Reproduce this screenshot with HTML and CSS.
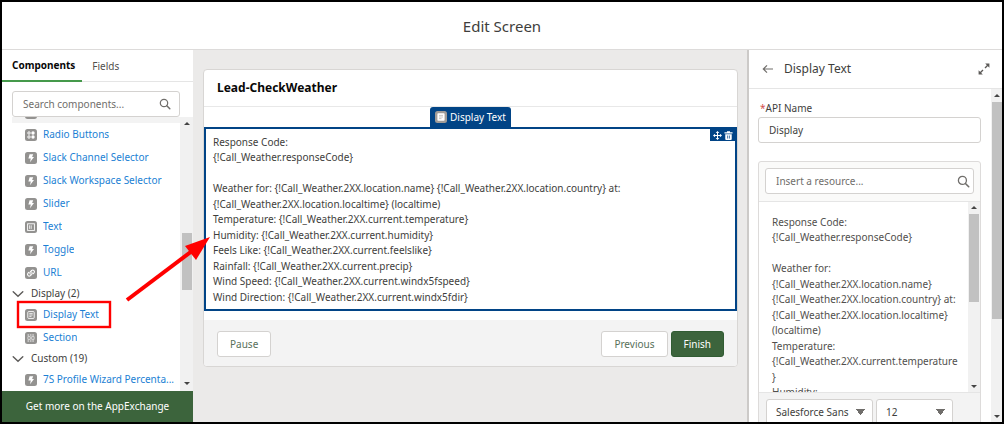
FILE: index.html
```html
<!DOCTYPE html>
<html lang="en">
<head>
<meta charset="utf-8">
<title>Edit Screen</title>
<link rel="stylesheet" href="styles.css">
</head>
<body>
<svg class="sprite" aria-hidden="true">
  <symbol id="bolt" viewBox="0 0 12 12"><rect width="12" height="12" rx="2.5" fill="#939290"/><path d="M4.6 2.2h3.6L7.1 4.9h1.9L5 10.2l.8-3.700H3.400z" fill="#fff"/></symbol>
  <symbol id="radio" viewBox="0 0 12 12"><rect width="12" height="12" rx="2.5" fill="#939290"/><g fill="none" stroke="#fff"><circle cx="4" cy="4" r="1.2"/><circle cx="4" cy="8" r="1.2"/></g><circle cx="8" cy="4" r="1.7" fill="#fff"/><circle cx="8" cy="8" r="1.7" fill="#fff"/></symbol>
  <symbol id="textbox" viewBox="0 0 12 12"><rect width="12" height="12" rx="2.5" fill="#939290"/><rect x="2.6" y="2.8" width="6.8" height="6.6" fill="none" stroke="#fff" stroke-width=".9"/><path d="M4.6 4.3v3.6M6.2 4.3v3.6" stroke="#fff" stroke-width=".8"/></symbol>
  <symbol id="url" viewBox="0 0 12 12"><rect width="12" height="12" rx="2.5" fill="#939290"/><g fill="none" stroke="#fff" stroke-width="1.1" stroke-linecap="round"><path d="M5.3 7.1a1.7 1.7 0 0 1 0-2.3l1.3-1.3a1.7 1.7 0 0 1 2.4 2.4l-.8.8"/><path d="M6.7 5a1.7 1.7 0 0 1 0 2.3L5.4 8.6A1.7 1.7 0 0 1 3 6.2l.8-.8"/></g></symbol>
  <symbol id="doc" viewBox="0 0 12 12"><rect width="12" height="12" rx="2.5" fill="#939290"/><rect x="2.8" y="2.6" width="6.4" height="6.8" rx=".8" fill="none" stroke="#fff" stroke-width=".9"/><path d="M4.3 4.6h3.4M4.3 6h3.4M4.3 7.4h2.2" stroke="#fff" stroke-width=".8"/></symbol>
  <symbol id="doc-solid" viewBox="0 0 12 12"><rect width="12" height="12" rx="2.5" fill="#a09c98"/><rect x="2.400" y="2.200" width="7.200" height="7.600" rx=".8" fill="#fff"/><path d="M4 4.400h4M4 6h4M4 7.600h2.500" stroke="#b5b2af" stroke-width=".7"/></symbol>
  <symbol id="section" viewBox="0 0 12 12"><rect width="12" height="12" rx="2.5" fill="#939290"/><path d="M2.500 3h7M2.500 9h7" stroke="#fff" stroke-width=".9" stroke-dasharray="1.600 .8"/><path d="M2.900 4.600h2.400v2.800H2.900zM6.700 4.600h2.400v2.800H6.700z" fill="none" stroke="#e8e8e8" stroke-width=".8"/></symbol>
  <symbol id="search" viewBox="0 0 12 12"><circle cx="5" cy="5" r="3.7" fill="none" stroke="#706e6b" stroke-width="1.2"/><path d="M7.8 7.8l3 3" stroke="#706e6b" stroke-width="1.5" stroke-linecap="round"/></symbol>
  <symbol id="chevron" viewBox="0 0 12 12"><path d="M1.2 3.8L6 8.3l4.8-4.5" fill="none" stroke="#5c5a58" stroke-width="1.4" stroke-linecap="round"/></symbol>
</svg>

<header class="titlebar"><h1>Edit Screen</h1></header>

<main class="workspace">
  <aside class="toolbox">
    <nav class="tabs">
      <button class="tab tab-active" type="button">Components</button>
      <button class="tab" type="button">Fields</button>
    </nav>
    <div class="search">
      <input type="text" class="field" placeholder="Search components..." aria-label="Search components">
      <svg class="icon search-icon"><use href="#search"/></svg>
    </div>
    <div class="list-area">
      <div class="list">
        <div class="list-cap"><svg class="icon"><use href="#bolt"/></svg></div>
        <a class="item" href="#"><svg class="icon"><use href="#radio"/></svg><span>Radio Buttons</span></a>
        <a class="item" href="#"><svg class="icon"><use href="#bolt"/></svg><span>Slack Channel Selector</span></a>
        <a class="item" href="#"><svg class="icon"><use href="#bolt"/></svg><span>Slack Workspace Selector</span></a>
        <a class="item" href="#"><svg class="icon"><use href="#bolt"/></svg><span>Slider</span></a>
        <a class="item" href="#"><svg class="icon"><use href="#textbox"/></svg><span>Text</span></a>
        <a class="item" href="#"><svg class="icon"><use href="#bolt"/></svg><span>Toggle</span></a>
        <a class="item" href="#"><svg class="icon"><use href="#url"/></svg><span>URL</span></a>
        <button class="group" type="button"><svg class="icon"><use href="#chevron"/></svg>Display (2)</button>
        <a class="item" href="#"><svg class="icon"><use href="#doc"/></svg><span>Display Text</span></a>
        <a class="item" href="#"><svg class="icon"><use href="#section"/></svg><span>Section</span></a>
        <button class="group" type="button"><svg class="icon"><use href="#chevron"/></svg>Custom (19)</button>
        <a class="item" href="#"><svg class="icon"><use href="#bolt"/></svg><span>7S Profile Wizard Percenta...</span></a>
      </div>
      <div class="scrollbar toolbox-scroll"><i class="up"></i><b class="thumb"></b><i class="down"></i></div>
    </div>
    <button class="exchange" type="button">Get more on the AppExchange</button>
  </aside>

  <section class="canvas">
    <article class="card">
      <h2>Lead-CheckWeather</h2>
      <div class="card-body">
        <div class="component-tab"><svg class="icon"><use href="#doc-solid"/></svg>Display Text</div>
        <div class="component">
          <div class="component-tools">
            <button type="button" aria-label="Move"><svg viewBox="0 0 10 10"><path d="M5 1v8M1 5h8" stroke="#fff" stroke-width="1.1"/><path d="M5 0l2 2.3H3zM5 10l2-2.3H3zM0 5l2.3-2v4zM10 5L7.700 3v4z" fill="#fff"/></svg></button>
            <button type="button" aria-label="Delete"><svg viewBox="0 0 10 10"><path d="M.5 1.500h2.800V.2h3.400v1.300h2.800v1.400H.5zM1.400 3.600h7.200V9q0 1-1 1H2.400q-1 0-1-1z" fill="#fff"/><path d="M4 5v3.400M6 5v3.400" stroke="#014486" stroke-width=".8"/></svg></button>
          </div>
          <div class="lines">
            <div>Response Code:</div>
            <div>{!Call_Weather.responseCode}</div>
            <div></div>
            <div>Weather for: {!Call_Weather.2XX.location.name} {!Call_Weather.2XX.location.country} at:</div>
            <div>{!Call_Weather.2XX.location.localtime} (localtime)</div>
            <div>Temperature: {!Call_Weather.2XX.current.temperature}</div>
            <div>Humidity: {!Call_Weather.2XX.current.humidity}</div>
            <div>Feels Like: {!Call_Weather.2XX.current.feelslike}</div>
            <div>Rainfall: {!Call_Weather.2XX.current.precip}</div>
            <div>Wind Speed: {!Call_Weather.2XX.current.windx5fspeed}</div>
            <div>Wind Direction: {!Call_Weather.2XX.current.windx5fdir}</div>
          </div>
        </div>
      </div>
      <footer class="card-footer">
        <button class="btn" type="button">Pause</button>
        <span class="spacer"></span>
        <button class="btn" type="button">Previous</button>
        <button class="btn btn-primary" type="button">Finish</button>
      </footer>
    </article>
  </section>

  <aside class="properties">
    <header class="prop-head">
      <button type="button" aria-label="Back"><svg class="icon" viewBox="0 0 12 12"><path d="M11 6H1.500M5 2.300L1.300 6 5 9.700" fill="none" stroke="#706e6b" stroke-width="1.200"/></svg></button>
      <h2>Display Text</h2>
      <button type="button" aria-label="Expand"><svg class="icon" viewBox="0 0 12 12"><path d="M7 5l3-3M5 7l-3 3" stroke="#5c5a58" stroke-width="1.400"/><path d="M7.200.6h4.200v4.200zM.6 7.200v4.200h4.200z" fill="#5c5a58"/></svg></button>
    </header>
    <div class="prop-body">
      <form class="prop-form">
        <label for="api"><abbr>*</abbr>API Name</label>
        <input id="api" class="field" type="text" value="Display">
        <div class="editor">
          <div class="search resource">
            <input type="text" class="field" placeholder="Insert a resource..." aria-label="Insert a resource">
            <svg class="icon search-icon"><use href="#search"/></svg>
          </div>
          <div class="editor-view">
            <div class="lines">
              <div>Response Code:</div>
              <div>{!Call_Weather.responseCode}</div>
              <div></div>
              <div>Weather for:</div>
              <div>{!Call_Weather.2XX.location.name}</div>
              <div>{!Call_Weather.2XX.location.country} at:</div>
              <div>{!Call_Weather.2XX.location.localtime}</div>
              <div>(localtime)</div>
              <div>Temperature:</div>
              <div>{!Call_Weather.2XX.current.temperature</div>
              <div>}</div>
              <div>Humidity:</div>
            </div>
            <div class="scrollbar editor-scroll"><i class="up"></i><b class="thumb"></b><i class="down"></i></div>
          </div>
          <div class="editor-tools">
            <select class="font-select" aria-label="Font"><option>Salesforce Sans</option></select>
            <select class="size-select" aria-label="Size"><option>12</option></select>
          </div>
        </div>
      </form>
      <div class="scrollbar prop-scroll"><i class="up"></i><b class="thumb"></b><i class="down"></i></div>
    </div>
  </aside>
</main>

<svg class="callout" viewBox="0 0 220 340" aria-hidden="true">
  <rect x="18" y="302" width="92" height="25" fill="none" stroke="#f00" stroke-width="2.400"/>
  <path d="M127 300L192 251" stroke="#f00" stroke-width="4"/>
  <path d="M210 237L185 246L196 260z" fill="#f00"/>
</svg>
</body>
</html>
```
FILE: styles.css
```css
* { box-sizing: border-box; }
body {
  margin: 0;
  height: 100vh;
  border: 2px solid #000;
  display: flex;
  flex-direction: column;
  overflow: hidden;
  position: relative;
  font: 10px/15px "Noto Sans", "Open Sans", sans-serif;
  color: #3e3e3c;
  background: #fff;
}
button, input, select { font: inherit; color: inherit; margin: 0; }
button { border: 0; padding: 0; background: none; }
h1, h2 { margin: 0; font-weight: 400; }
.sprite { position: absolute; width: 0; height: 0; }
.icon { width: 12px; height: 12px; flex: none; display: block; }

.titlebar {
  flex: none;
  height: 48px;
  display: flex;
  align-items: center;
  justify-content: center;
  border-bottom: 1px solid #dddbda;
}
.titlebar h1 { font-size: 15px; line-height: 20px; }

.workspace {
  flex: 1;
  min-height: 0;
  display: grid;
  grid-template-columns: 191px 1fr 255px;
}
.toolbox, .properties { display: flex; flex-direction: column; min-height: 0; min-width: 0; }

.tabs { flex: none; display: flex; height: 32px; border-bottom: 1px solid #e5e5e5; }
.tab { padding: 0 10px; height: 32px; color: #514f4d; }
.tab-active { padding-right: 7px; color: #080707; font-weight: 700; border-bottom: 2px solid #45994b; }

.search { position: relative; margin: 9px 13px 0 10px; }
.search-icon { position: absolute; right: 9px; top: 7px; }
.field {
  display: block;
  width: 100%;
  height: 26px;
  padding: 0 10px;
  border: 1px solid #d4d2d0;
  border-radius: 3px;
  background: #fff;
}
.field::placeholder { color: #706e6b; opacity: 1; }

.list-area { flex: 1; min-height: 0; display: flex; margin-left: 10px; }
.list { flex: 1; min-width: 0; overflow: hidden; }
.list-cap { height: 6px; overflow: hidden; background: #f3f3f3; display: flex; align-items: flex-end; padding: 0 0 4px 13px; }
.item {
  height: 23px;
  display: flex;
  align-items: center;
  gap: 6px;
  padding: 0 2px 0 13px;
  color: #1b7fd4;
  text-decoration: none;
}
.item span { overflow: hidden; text-overflow: ellipsis; white-space: nowrap; }
.group { height: 19px; width: 100%; display: flex; align-items: center; gap: 7px; }

.scrollbar { flex: none; width: 12px; background: #f1f1f1; display: flex; flex-direction: column; align-items: center; }
.scrollbar .up, .scrollbar .down { border: 3px solid transparent; }
.scrollbar .up { border-bottom-color: #444; border-top-width: 0; }
.scrollbar .down { border-top-color: #444; border-bottom-width: 0; margin-top: auto; }
.thumb { width: 10px; background: #c1c1c1; }
.toolbox-scroll { padding: 5px 0 6px; width: 13px; }
.toolbox-scroll .thumb { height: 57px; margin-top: 108px; }

.exchange { flex: none; height: 31px; background: #3c643c; color: #fff; }

.canvas { background: #ebeae9; padding: 19px 9px 0 10px; min-width: 0; }
.card { border: 1px solid #d8d6d4; border-radius: 4px; background: #fff; overflow: hidden; }
.card h2 { height: 37px; padding: 0 13px; font-size: 12px; line-height: 36px; font-weight: 700; color: #080707; border-bottom: 1px solid #e8e8e8; }
.card-body { padding-bottom: 9px; display: flex; flex-direction: column; align-items: center; }
.component-tab {
  height: 20px;
  display: flex;
  align-items: center;
  gap: 3px;
  padding: 0 5px;
  border-radius: 3px 3px 0 0;
  background: #014486;
  color: #fff;
}
.component { position: relative; width: 100%; border: 2px solid #014486; padding: 6px 7px 4px; }
.component-tools { position: absolute; top: 0; right: 0; height: 12px; width: 25px; display: flex; align-items: center; justify-content: center; gap: 2px; background: #014486; }
.component-tools svg { width: 9px; height: 9px; display: block; }
.lines div { height: 15px; white-space: nowrap; }
.lines div:nth-child(2n) { margin-bottom: 1px; }

.card-footer { display: flex; align-items: center; gap: 3px; padding: 11px 13px 9px; background: #f3f3f3; }
.spacer { flex: 1; }
.btn { height: 26px; padding: 0 12px; border: 1px solid #d4d2d0; border-radius: 3px; background: #fff; color: #58705a; }
.btn-primary { border-color: #315c33; background: #3c643c; color: #fff; }

.properties { border-left: 2px solid #cccac8; }
.prop-head { flex: none; height: 39px; display: flex; align-items: center; gap: 10px; padding: 0 12px 0 13px; border-bottom: 1px solid #e5e5e5; }
.prop-head h2 { flex: 1; font-size: 12px; line-height: 20px; }
.prop-body { flex: 1; min-height: 0; display: flex; }
.prop-form { flex: 1; min-width: 0; padding: 12px 10px 0 9px; overflow: hidden; }
.prop-form label { display: block; padding: 0 2px; height: 16px; }
.prop-form abbr { color: #d4504c; }
.editor { margin-top: 18px; border: 1px solid #dddbda; border-radius: 3px; background: #fafaf9; }
.resource { margin: 6px; }
.resource .search-icon { right: 4px; width: 13px; height: 13px; }
.editor-view { height: 192px; display: flex; overflow: hidden; background: #fff; border: 1px solid #e5e5e5; border-width: 1px 0; margin-top: 7px; }
.editor-view .lines { flex: 1; min-width: 0; padding: 13px 0 0 13px; color: #514f4d; }
.editor-scroll { padding: 4px 0 4px; }
.editor-scroll .thumb { height: 88px; margin-top: 5px; }
.editor-tools { display: flex; gap: 3px; padding: 6px 7px; background: #f3f3f3; }
.editor-tools select {
  appearance: none;
  height: 26px;
  padding: 0 9px;
  border: 1px solid #d4d2d0;
  border-radius: 3px;
  background: #fff conic-gradient(from -40deg at 50% 100%, #706e6b 80deg, transparent 0) no-repeat right 7px center / 9px 6px;
}
.editor-tools .font-select { width: 107px; }
.editor-tools .size-select { width: 77px; }
.prop-scroll { width: 11px; padding: 5px 0 4px; }
.prop-scroll .thumb { height: 217px; margin-top: 5px; }

.callout { position: absolute; left: -2px; top: -2px; width: 220px; height: 340px; pointer-events: none; }
```
